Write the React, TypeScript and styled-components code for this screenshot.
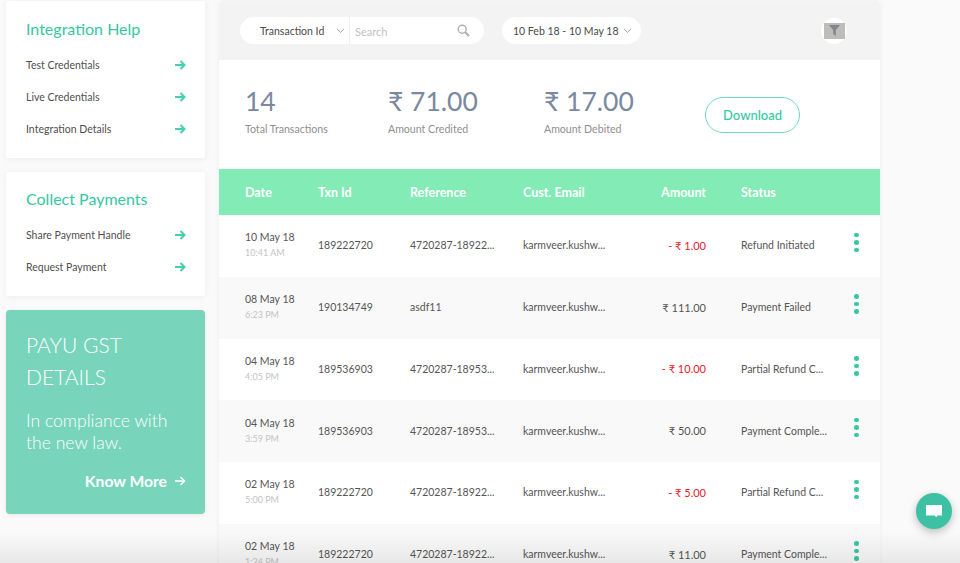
import React from "react";
import styled, { createGlobalStyle } from "styled-components";

const Global = createGlobalStyle`
  html, body { margin: 0; padding: 0; height: 563px; overflow: hidden; background: #fafafa; }
  body { font-family: Lato, "Noto Sans", sans-serif; color: #4d4d4d; }
  * { box-sizing: border-box; }
`;

const Page = styled.div`
  position: relative;
  width: 960px;
  height: 563px;
  overflow: hidden;
  display: flex;
  align-items: flex-start;
  gap: 14px;
  padding: 1px 0 0 6px;
`;
const Sidebar = styled.aside`
  width: 199px;
  flex: none;
  display: flex;
  flex-direction: column;
  gap: 14px;
`;
const Card = styled.section<{ $h: number; $top: number }>`
  height: ${(p) => p.$h}px;
  background: #fff;
  box-shadow: 0 1px 6px rgba(0, 0, 0, 0.06);
  padding: ${(p) => p.$top}px 19px 0 20px;
  border-radius: 2px;
`;
const CardTitle = styled.h2`
  margin: 0 0 8px;
  font-size: 16px;
  line-height: 24px;
  font-weight: 400;
  color: #35c8a2;
`;
const LinkRow = styled.div`
  height: 32px;
  display: flex;
  align-items: center;
  justify-content: space-between;
  font-size: 10.5px;
  color: #4f4f4f;
`;
const Promo = styled.section`
  height: 204px;
  background: #78d5bb;
  border-radius: 4px;
  box-shadow: 0 1px 4px rgba(0, 0, 0, 0.08);
  padding: 19px 19px 0 20px;
  color: #fff;
  display: flex;
  flex-direction: column;
`;
const PromoTitle = styled.div`
  font-size: 21px;
  line-height: 32px;
  font-weight: 300;
`;
const PromoText = styled.div`
  margin-top: 17px;
  font-size: 17.6px;
  line-height: 22px;
  font-weight: 300;
`;
const KnowMore = styled.div`
  margin-top: 15px;
  display: flex;
  justify-content: flex-end;
  align-items: center;
  gap: 7px;
  font-size: 15.7px;
  font-weight: 700;
  line-height: 24px;
`;
const Main = styled.main`
  width: 661px;
  flex: none;
  background: #fff;
  box-shadow: 0 0 6px rgba(0, 0, 0, 0.05);
`;
const FilterBar = styled.div`
  height: 59px;
  background: #f3f3f3;
  display: flex;
  align-items: center;
  padding: 0 33px 0 21px;
  border-radius: 3px 3px 0 0;
`;
const Pill = styled.div`
  height: 27px;
  background: #fff;
  border-radius: 14px;
  display: flex;
  align-items: center;
  font-size: 10.5px;
  color: #4a4a4a;
`;
const SearchPill = styled(Pill)`
  width: 244px;
`;
const SelectPart = styled.div`
  width: 110px;
  height: 100%;
  flex: none;
  display: flex;
  align-items: center;
  padding-left: 20px;
  gap: 12px;
  border-right: 1px solid #efefef;
`;
const SearchPart = styled.div`
  flex: 1;
  display: flex;
  align-items: center;
  justify-content: space-between;
  padding: 0 14px 0 5px;
  color: #c2c2c2;
  font-size: 11px;
`;
const SearchHint = styled.span`
  transform: translateY(1px);
`;
const DatePill = styled(Pill)`
  width: 139px;
  margin-left: 18px;
  padding-left: 11px;
  gap: 4px;
`;
const FilterButton = styled.div`
  margin-left: auto;
  width: 26px;
  height: 26px;
  border-radius: 50%;
  background: #fff;
  display: flex;
  align-items: center;
  justify-content: center;
`;
const FilterSwatch = styled.div`
  width: 21px;
  height: 16px;
  background: #bdbdb9;
  display: flex;
  align-items: center;
  justify-content: center;
`;
const Stats = styled.div`
  height: 109px;
  display: flex;
  padding: 23px 0 0 26px;
  position: relative;
`;
const Stat = styled.div<{ $w: number }>`
  width: ${(p) => p.$w}px;
  flex: none;
`;
const StatValue = styled.div`
  font-size: 26.5px;
  line-height: 36px;
  color: #7a899f;
`;
const StatLabel = styled.div`
  margin-top: 2px;
  font-size: 10.6px;
  line-height: 16px;
  color: #8f8f8f;
`;
const Download = styled.div`
  width: 95px;
  height: 36px;
  margin: 14px 0 0 6px;
  border: 1px solid #6fd8bd;
  border-radius: 18px;
  display: flex;
  align-items: center;
  justify-content: center;
  font-size: 13px;
  font-weight: 500;
  color: #35c8a2;
`;
const grid = `
  display: grid;
  grid-template-columns: 73px 92px 113px 113px 70px 35px 104px 1fr;
  padding-left: 26px;
  align-items: center;
`;
const Head = styled.div`
  ${grid}
  height: 46px;
  background: #83ebb5;
  color: #fff;
  font-size: 12.5px;
  font-weight: 700;
`;
const Row = styled.div<{ $alt: boolean }>`
  ${grid}
  height: 61.75px;
  padding-bottom: 1px;
  font-size: 10.5px;
  color: #555;
  background: ${(p) => (p.$alt ? "#f9f9f9" : "#fff")};
`;
const DateCell = styled.div`
  font-size: 10.5px;
  line-height: 15px;
  color: #555;
`;
const TimeText = styled.div`
  font-size: 9px;
  line-height: 15px;
  color: #c4c4c4;
`;
const Amount = styled.div<{ $neg?: boolean }>`
  text-align: right;
  font-size: 11px;
  color: ${(p) => (p.$neg ? "#e8202a" : "#555")};
  white-space: nowrap;
`;
const HeadAmount = styled.div`
  text-align: right;
  white-space: nowrap;
`;
const Kebab = styled.div`
  width: 4.5px;
  margin-left: 9px;
  display: flex;
  flex-direction: column;
  gap: 3px;
  transform: translateY(-3px);
`;
const Dot = styled.span`
  width: 4.5px;
  height: 4.5px;
  border-radius: 50%;
  background: #35c8a2;
`;
const Spacer = styled.div``;
const Nowrap = styled.div`
  white-space: nowrap;
`;
const ChatButton = styled.div`
  position: absolute;
  left: 916px;
  top: 493px;
  width: 36px;
  height: 36px;
  border-radius: 50%;
  background: #3cc1a4;
  box-shadow: 0 3px 8px rgba(0, 0, 0, 0.25);
  display: flex;
  align-items: center;
  justify-content: center;
`;
const BottomFade = styled.div`
  position: absolute;
  left: 0;
  right: 0;
  bottom: 0;
  height: 32px;
  background: linear-gradient(to bottom, rgba(0, 0, 0, 0), rgba(0, 0, 0, 0.07));
  pointer-events: none;
`;

const Arrow = ({ size = 12, color = "#45cfac", w = 2 }: { size?: number; color?: string; w?: number }) => (
  <svg width={size} height={size} viewBox="0 0 12 12" fill="none" stroke={color} strokeWidth={w}>
    <path d="M1 6h9.5M6.5 2l4 4-4 4" />
  </svg>
);
const Chevron = () => (
  <svg width="9" height="6" viewBox="0 0 9 6" fill="none" stroke="#a9a9a9" strokeWidth="1">
    <path d="M1 1l3.5 3.5L8 1" />
  </svg>
);

const rows = [
  ["10 May 18", "10:41 AM", "189222720", "4720287-18922...", "- ₹ 1.00", "Refund Initiated"],
  ["08 May 18", "6:23 PM", "190134749", "asdf11", "₹ 111.00", "Payment Failed"],
  ["04 May 18", "4:05 PM", "189536903", "4720287-18953...", "- ₹ 10.00", "Partial Refund C..."],
  ["04 May 18", "3:59 PM", "189536903", "4720287-18953...", "₹ 50.00", "Payment Comple..."],
  ["02 May 18", "5:00 PM", "189222720", "4720287-18922...", "- ₹ 5.00", "Partial Refund C..."],
  ["02 May 18", "1:24 PM", "189222720", "4720287-18922...", "₹ 11.00", "Payment Comple..."],
];

export default function App() {
  return (
    <Page>
      <Global />
      <Sidebar>
        <Card $h={157} $top={16}>
          <CardTitle>Integration Help</CardTitle>
          {["Test Credentials", "Live Credentials", "Integration Details"].map((t) => (
            <LinkRow key={t}>
              {t}
              <Arrow />
            </LinkRow>
          ))}
        </Card>
        <Card $h={124} $top={15}>
          <CardTitle>Collect Payments</CardTitle>
          {["Share Payment Handle", "Request Payment"].map((t) => (
            <LinkRow key={t}>
              {t}
              <Arrow />
            </LinkRow>
          ))}
        </Card>
        <Promo>
          <PromoTitle>
            PAYU GST
            <br />
            DETAILS
          </PromoTitle>
          <PromoText>
            In compliance with
            <br />
            the new law.
          </PromoText>
          <KnowMore>
            Know More
            <Arrow color="#fff" size={12} w={1.6} />
          </KnowMore>
        </Promo>
      </Sidebar>
      <Main>
        <FilterBar>
          <SearchPill>
            <SelectPart>
              Transaction Id
              <Chevron />
            </SelectPart>
            <SearchPart>
              <SearchHint>Search</SearchHint>
              <svg width="13" height="13" viewBox="0 0 13 13" fill="none" stroke="#b0b0b0" strokeWidth="1.4">
                <circle cx="5.2" cy="5.2" r="4" />
                <path d="M8.2 8.2L12 12" strokeWidth="2" />
              </svg>
            </SearchPart>
          </SearchPill>
          <DatePill>
            10 Feb 18 - 10 May 18
            <Chevron />
          </DatePill>
          <FilterButton>
            <FilterSwatch>
              <svg width="11" height="11" viewBox="0 0 11 11" fill="#85858c">
                <path d="M0 0h11L6.8 5v6L4.2 9V5z" />
              </svg>
            </FilterSwatch>
          </FilterButton>
        </FilterBar>
        <Stats>
          <Stat $w={143}>
            <StatValue>14</StatValue>
            <StatLabel>Total Transactions</StatLabel>
          </Stat>
          <Stat $w={156}>
            <StatValue>₹ 71.00</StatValue>
            <StatLabel>Amount Credited</StatLabel>
          </Stat>
          <Stat $w={155}>
            <StatValue>₹ 17.00</StatValue>
            <StatLabel>Amount Debited</StatLabel>
          </Stat>
          <Download>Download</Download>
        </Stats>
        <Head>
          <div>Date</div>
          <div>Txn Id</div>
          <div>Reference</div>
          <div>Cust. Email</div>
          <HeadAmount>Amount</HeadAmount>
          <Spacer />
          <div>Status</div>
          <Spacer />
        </Head>
        {rows.map((r, i) => (
          <Row key={i} $alt={i % 2 === 1}>
            <DateCell>
              {r[0]}
              <TimeText>{r[1]}</TimeText>
            </DateCell>
            <Nowrap>{r[2]}</Nowrap>
            <Nowrap>{r[3]}</Nowrap>
            <Nowrap>karmveer.kushw...</Nowrap>
            <Amount $neg={r[4].startsWith("-")}>{r[4]}</Amount>
            <Spacer />
            <Nowrap>{r[5]}</Nowrap>
            <Kebab>
              <Dot />
              <Dot />
              <Dot />
            </Kebab>
          </Row>
        ))}
      </Main>
      <BottomFade />
      <ChatButton>
        <svg width="18" height="14" viewBox="0 0 18 14" fill="#fff">
          <path d="M1 1h16v10.5h-4.5L11 13.5 10 11.5H1z" />
        </svg>
      </ChatButton>
    </Page>
  );
}
